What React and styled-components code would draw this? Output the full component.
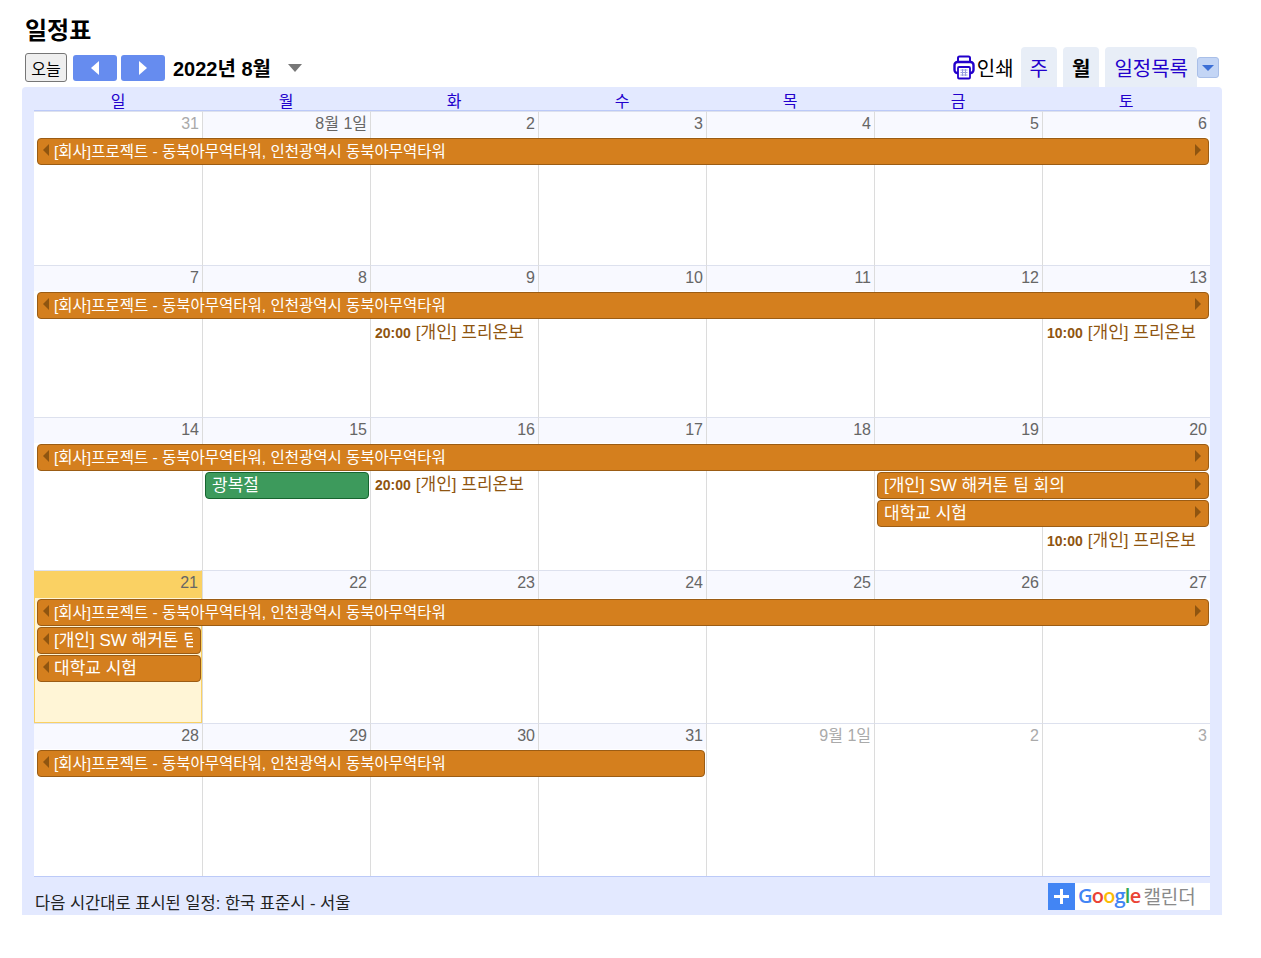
import React from 'react';
import styled, { createGlobalStyle } from 'styled-components';

const FONT = `"Liberation Sans", "Noto Sans CJK KR", sans-serif`;

const GlobalStyle = createGlobalStyle`
  html, body {
    margin: 0;
    padding: 0;
    background: #fff;
    font-family: ${FONT};
  }
`;

const Page = styled.div`
  width: 1200px;
  margin-left: 22px;
  padding-top: 16px;
`;

const Title = styled.h1`
  margin: 0 0 0 3px;
  height: 30px;
  font-size: 24px;
  line-height: 30px;
  font-weight: 700;
  color: #000;
`;

const Toolbar = styled.div`
  display: flex;
  justify-content: space-between;
  align-items: flex-end;
  height: 41px;
`;

const Left = styled.div`
  display: flex;
  align-items: center;
  padding: 0 0 5px 3px;
`;

const TodayButton = styled.button`
  width: 42px;
  height: 29px;
  padding: 0;
  margin-right: 6px;
  border: 1px solid #767676;
  border-radius: 3px;
  background: #efefef;
  color: #000;
  font-family: ${FONT};
  font-size: 16px;
`;

const NavButton = styled.button`
  display: flex;
  align-items: center;
  justify-content: center;
  width: 44px;
  height: 26px;
  padding: 0;
  margin-right: 4px;
  border: 0;
  border-radius: 3px;
  background: #668cef;
`;

const NavArrow = styled.span`
  width: 0;
  height: 0;
  border-top: 7px solid transparent;
  border-bottom: 7px solid transparent;
  ${(p) =>
    p.$dir === 'left'
      ? 'border-right: 8px solid #fff;'
      : 'border-left: 8px solid #fff;'}
`;

const MonthLabel = styled.span`
  margin-left: 4px;
  width: 115px;
  font-size: 20px;
  font-weight: 700;
  color: #000;
`;

const MonthCaret = styled.span`
  width: 0;
  height: 0;
  border-left: 7px solid transparent;
  border-right: 7px solid transparent;
  border-top: 8px solid #777;
`;

const Right = styled.div`
  display: flex;
  align-items: flex-end;
  padding-right: 3px;
`;

const PrintLink = styled.div`
  display: flex;
  align-items: center;
  gap: 2px;
  height: 40px;
  margin-right: 7px;
  font-size: 20px;
  color: #000;
`;

const Tab = styled.div`
  display: flex;
  align-items: center;
  justify-content: center;
  height: 40px;
  padding: 0 9px;
  margin-left: ${(p) => p.$gap || 0}px;
  border-radius: 4px 4px 0 0;
  background: #e8eef7;
  font-size: 20px;
  font-weight: ${(p) => (p.$active ? 700 : 400)};
  color: ${(p) => (p.$active ? '#000' : '#2200cc')};
`;

const ListMenu = styled.div`
  display: flex;
  align-items: center;
  justify-content: center;
  align-self: center;
  width: 22px;
  height: 21px;
  box-sizing: border-box;
  border: 1px solid #a9bfe8;
  border-radius: 3px;
  background: #c3d5f5;
`;

const ListMenuCaret = styled.span`
  width: 0;
  height: 0;
  margin-top: 1px;
  border-left: 6px solid transparent;
  border-right: 6px solid transparent;
  border-top: 6px solid #3c6fd6;
`;

const Panel = styled.div`
  height: 828px;
  padding: 0 12px;
  box-sizing: border-box;
  border-radius: 4px 4px 0 0;
  background: #e3e9ff;
`;

const DayNames = styled.div`
  display: grid;
  grid-template-columns: repeat(7, 168px);
  height: 24px;
  box-sizing: border-box;
  border-bottom: 1px solid #bccaf8;
`;

const DayName = styled.div`
  padding-top: 5px;
  font-size: 16px;
  line-height: 19px;
  text-align: center;
  color: #2200cc;
`;

const Week = styled.div`
  display: grid;
  grid-template-columns: repeat(7, 168px);
  grid-template-rows: ${(p) => p.$head}px 28px 28px 28px 28px 1fr;
  height: ${(p) => p.$height}px;
  background: #fff;
`;

const DayCell = styled.div`
  grid-column: ${(p) => p.$col};
  grid-row: 1 / -1;
  box-sizing: border-box;
  border-top: 1px solid #dde1ee;
  border-left: ${(p) => (p.$col > 1 ? '1px solid #dcdcdc' : '0')};
  ${(p) =>
    p.$today &&
    `
    background: #fff5d6;
    border-left: 1px solid #fad163;
    border-right: 1px solid #fad163;
    border-bottom: 1px solid #fad163;
  `}
`;

const DateStrip = styled.div`
  height: ${(p) => p.$head - 2}px;
  padding-right: ${(p) => (p.$today ? 3 : 3)}px;
  font-size: 16px;
  line-height: 24px;
  text-align: right;
  background: ${(p) =>
    p.$today ? '#fad163' : p.$muted ? '#fff' : '#f8f9ff'};
  color: ${(p) => (p.$muted ? '#aaa' : '#666')};
`;

const AllDay = styled.div`
  grid-column: ${(p) => p.$col} / span ${(p) => p.$span};
  grid-row: ${(p) => p.$row};
  z-index: 1;
  display: flex;
  align-items: center;
  align-self: start;
  height: 27px;
  box-sizing: border-box;
  margin: 0 1px 0 3px;
  padding: 0 7px 0 5px;
  border: 1px solid ${(p) => (p.$green ? '#17642f' : '#9b5c14')};
  border-radius: 4px;
  background: ${(p) => (p.$green ? '#3d9a5c' : '#d47f1e')};
  color: #fff;
  font-size: 17px;
  white-space: nowrap;
`;

const EventArrow = styled.span`
  flex: none;
  width: 0;
  height: 0;
  margin-top: -3px;
  border-top: 6px solid transparent;
  border-bottom: 6px solid transparent;
  ${(p) =>
    p.$dir === 'left'
      ? 'border-right: 6px solid #8f5510; margin-right: 5px;'
      : 'border-left: 6px solid #8f5510;'}
`;

const EventTitle = styled.span`
  flex: 1;
  min-width: 0;
  overflow: hidden;
  padding-left: ${(p) => (p.$inset ? 1 : 0)}px;
  font-size: ${(p) => (p.$small ? 15.5 : 17)}px;
  line-height: 23px;
`;

const Timed = styled.div`
  grid-column: ${(p) => p.$col};
  grid-row: ${(p) => p.$row};
  z-index: 1;
  padding: 1px 0 0 5px;
  overflow: hidden;
  white-space: nowrap;
  color: #8f5510;
  font-size: 17px;
  line-height: 24px;
`;

const TimedHour = styled.b`
  margin-right: 5px;
  font-size: 14px;
`;

const Footer = styled.div`
  display: flex;
  justify-content: space-between;
  align-items: flex-start;
  border-top: 1px solid #bccaf8;
  height: 38px;
  box-sizing: border-box;
`;

const Zone = styled.div`
  padding: 16px 0 0 1px;
  font-size: 16.5px;
  line-height: 20px;
  color: #222;
`;

const Badge = styled.div`
  display: flex;
  align-items: center;
  height: 27px;
  width: 162px;
  margin-top: 6px;
  background: #fff;
`;

const PlusBox = styled.span`
  display: flex;
  align-items: center;
  justify-content: center;
  width: 27px;
  height: 27px;
  margin-right: 3px;
  background: #4285f4;
`;

const GoogleWord = styled.span`
  font-family: "Open Sans", ${FONT};
  font-size: 20px;
  font-weight: 600;
  letter-spacing: -0.8px;
  margin-top: -3px;
`;

const Letter = styled.span`
  color: ${(p) => p.$c};
`;

const BadgeText = styled.span`
  margin-left: 3px;
  font-size: 19px;
  color: #8a8a8a;
  margin-top: -2px;
`;

const PROJECT = '[회사]프로젝트 - 동북아무역타워, 인천광역시 동북아무역타워';
const HACK = '[개인] SW 해커톤 팀 회의';
const EXAM = '대학교 시험';
const ONBOARD = '[개인] 프리온보';

const weeks = [
  {
    height: 154,
    head: 27,
    days: ['31', '8월 1일', '2', '3', '4', '5', '6'],
    muted: [0],
    events: [{ title: PROJECT, col: 1, span: 7, row: 2, left: true, right: true, small: true }],
  },
  {
    height: 152,
    head: 27,
    days: ['7', '8', '9', '10', '11', '12', '13'],
    events: [{ title: PROJECT, col: 1, span: 7, row: 2, left: true, right: true, small: true }],
    timed: [
      { hour: '20:00', col: 3, row: 3 },
      { hour: '10:00', col: 7, row: 3 },
    ],
  },
  {
    height: 153,
    head: 27,
    days: ['14', '15', '16', '17', '18', '19', '20'],
    events: [
      { title: PROJECT, col: 1, span: 7, row: 2, left: true, right: true, small: true },
      { title: '광복절', col: 2, span: 1, row: 3, green: true },
      { title: HACK, col: 6, span: 2, row: 3, right: true },
      { title: EXAM, col: 6, span: 2, row: 4, right: true },
    ],
    timed: [
      { hour: '20:00', col: 3, row: 3 },
      { hour: '10:00', col: 7, row: 5 },
    ],
  },
  {
    height: 153,
    head: 29,
    days: ['21', '22', '23', '24', '25', '26', '27'],
    today: 0,
    events: [
      { title: PROJECT, col: 1, span: 7, row: 2, left: true, right: true, small: true },
      { title: HACK, col: 1, span: 1, row: 3, left: true },
      { title: EXAM, col: 1, span: 1, row: 4, left: true },
    ],
  },
  {
    height: 153,
    head: 27,
    days: ['28', '29', '30', '31', '9월 1일', '2', '3'],
    muted: [4, 5, 6],
    events: [{ title: PROJECT, col: 1, span: 4, row: 2, left: true, small: true }],
  },
];

const PrintIcon = () => (
  <svg width="22" height="25" viewBox="0 0 22 25" fill="none">
    <rect x="5" y="1.5" width="12" height="6" rx="1.5" stroke="#2200cc" strokeWidth="2" />
    <rect x="1.5" y="7" width="19" height="11" rx="3" fill="#fff" stroke="#2200cc" strokeWidth="2.4" />
    <rect x="5" y="12" width="12" height="11.5" rx="1" fill="#fff" stroke="#2200cc" strokeWidth="1.8" />
    <path d="M7.5 15h7M7.5 17.5h7M7.5 20h7M9.5 14v7M12.5 14v7" stroke="#9aa0e0" strokeWidth="1" />
  </svg>
);

const PlusIcon = () => (
  <svg width="17" height="17" viewBox="0 0 17 17">
    <path d="M8.5 1v15M1 8.5h15" stroke="#fff" strokeWidth="3" />
  </svg>
);

const App = () => {
  return (
    <Page>
      <GlobalStyle />
      <Title>일정표</Title>
      <Toolbar>
        <Left>
          <TodayButton>오늘</TodayButton>
          <NavButton><NavArrow $dir="left" /></NavButton>
          <NavButton><NavArrow $dir="right" /></NavButton>
          <MonthLabel>2022년 8월</MonthLabel>
          <MonthCaret />
        </Left>
        <Right>
          <PrintLink><PrintIcon />인쇄</PrintLink>
          <Tab>주</Tab>
          <Tab $active $gap={6}>월</Tab>
          <Tab $gap={6}>일정목록</Tab>
          <ListMenu><ListMenuCaret /></ListMenu>
        </Right>
      </Toolbar>
      <Panel>
        <DayNames>
          {['일', '월', '화', '수', '목', '금', '토'].map((d) => (
            <DayName key={d}>{d}</DayName>
          ))}
        </DayNames>
        {weeks.map((w) => (
          <Week key={w.days[0]} $height={w.height} $head={w.head}>
            {w.days.map((d, i) => (
              <DayCell key={d} $col={i + 1} $today={w.today === i}>
                <DateStrip
                  $head={w.head}
                  $today={w.today === i}
                  $muted={w.muted && w.muted.includes(i)}
                >
                  {d}
                </DateStrip>
              </DayCell>
            ))}
            {w.events.map((e) => (
              <AllDay key={e.title + e.col} $col={e.col} $span={e.span} $row={e.row} $green={e.green}>
                {e.left && <EventArrow $dir="left" />}
                <EventTitle $small={e.small} $inset={!e.left}>{e.title}</EventTitle>
                {e.right && <EventArrow $dir="right" />}
              </AllDay>
            ))}
            {(w.timed || []).map((t) => (
              <Timed key={t.col} $col={t.col} $row={t.row}>
                <TimedHour>{t.hour}</TimedHour>
                {ONBOARD}
              </Timed>
            ))}
          </Week>
        ))}
        <Footer>
          <Zone>다음 시간대로 표시된 일정: 한국 표준시 - 서울</Zone>
          <Badge>
            <PlusBox><PlusIcon /></PlusBox>
            <GoogleWord>
              <Letter $c="#4285f4">G</Letter>
              <Letter $c="#ea4335">o</Letter>
              <Letter $c="#fbbc05">o</Letter>
              <Letter $c="#4285f4">g</Letter>
              <Letter $c="#34a853">l</Letter>
              <Letter $c="#ea4335">e</Letter>
            </GoogleWord>
            <BadgeText>캘린더</BadgeText>
          </Badge>
        </Footer>
      </Panel>
    </Page>
  );
};

export default App;
